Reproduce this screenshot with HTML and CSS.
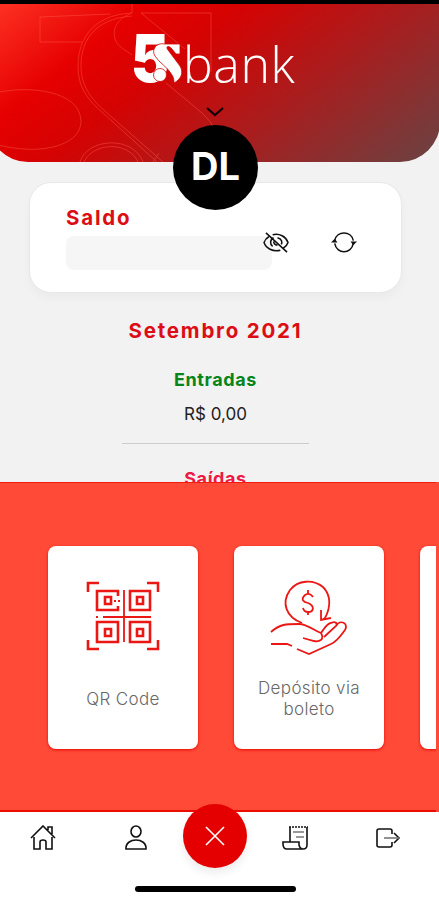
FILE: index.html
```
<!DOCTYPE html>
<html lang="pt-BR">
<head>
    <meta charset="UTF-8">
    <meta name="viewport" content="width=device-width, initial-scale=1.0">
    <title>5S bank</title>
    <link rel="stylesheet" href="styles.css">
</head>
<body>
    <div class="app">
        <header class="header">
            <svg class="header-lines" width="451" height="158" viewBox="-12 4 451 158" fill="none">
                <path d="M110 14 L40 17 V42 H82 M132 4 V13 C90 15 78 42 78 66 C78 88 88 100 103 113 L157 162 M132 16 C92 19 81 43 81 66 C81 86 91 99 106 112 L163 162"/>
                <path d="M132 13 C118 18 112 28 115 39 C117 46 124 49 132 55 M141 13 H211 V72 M141 13 L185 49 M166 83 L202 113 Q210 120 217 132"/>
                <path d="M0 92 C28 86 80 90 81 121 C81 144 48 151 24 149 C12 148 4 147 -8 143 M80 162 C87 138 133 135 143 162 M84 162 C92 143 128 140 138 162 M159 153 L153 162"/>
            </svg>
            <div class="logo">
                <svg class="logo-mark" width="52" height="54" viewBox="0 0 52 54">
                    <text class="logo-five" x="-3" y="50" textLength="38" lengthAdjust="spacingAndGlyphs">5</text>
                    <path class="logo-swoosh" d="M46 12 H31 C22 10 17 18 21 24 C25 31 34 35 38 43 C40 46 40 49 40 51 C47 47 50 41 46 34 L34 18 C31 14 35 13 38 17 L42 22 H46 Z"/>
                    <circle class="logo-ball" cx="26" cy="43" r="6.5"/>
                </svg>
                <span class="logo-name">bank</span>
            </div>
            <svg class="chevron" width="20" height="12" viewBox="0 0 20 12"><path d="M2 2 L10 9 L18 2"/></svg>
            <div class="avatar">DL</div>
        </header>

        <main class="content">
            <section class="balance">
                <div class="balance-info">
                    <h2>Saldo</h2>
                    <div class="balance-value"></div>
                </div>
                <div class="balance-actions">
                    <svg width="27" height="23" viewBox="0 0 28 24">
                        <path d="M10 4 C17 2 24 6 26 12 C25 15 23 17 21 18 M18 20 C10 22 3 18 1 12 C2 9 4 7 6 6 M11 7 C7 9 7 14 10 16 M15 7 C20 8 20 12 19 14 M11 11 Q11 14 15 15 M3 2 L25 22"/>
                    </svg>
                    <svg width="26" height="23" viewBox="0 0 28 24">
                        <path d="M4 10 C6 -1 22 -1 24 10 M4 13 C6 25 22 25 24 13"/>
                        <path class="fill" d="M0 12 L4 8 L7 12 Z M21 11 H28 L24 15 Z"/>
                    </svg>
                </div>
            </section>

            <section class="month">
                <h2>Setembro 2021</h2>
                <h3 class="income">Entradas</h3>
                <p>R$ 0,00</p>
                <h3 class="expense">Saídas</h3>
            </section>
        </main>

        <section class="services">
            <div class="card">
                <svg width="74" height="74" viewBox="0 0 74 74">
                    <path class="thick" d="M2 12 V3 H13 M61 3 H72 V12 M2 60 V69 H13 M61 69 H72 V60"/>
                    <path class="thick" d="M32 16 V11 H11 V30 H32 V26 M44 11 H64 V30 H44 Z M11 42 H32 V62 H11 Z M44 42 H64 V62 H44 Z"/>
                    <path class="thick" d="M19 17 H25 V24 H19 Z M51 17 H57 V24 H51 Z M19 49 H25 V56 H19 Z M51 49 H57 V56 H51 Z"/>
                    <path d="M38 10 V62 M17 37 H65 M10 37 H12 M28 21 H30 M32 21 H34"/>
                </svg>
                <span>QR Code</span>
            </div>
            <div class="card deposit">
                <svg width="78" height="76" viewBox="0 0 78 76">
                    <path d="M32 43 C16 37 11 23 20 10 C28 0 43 -1 53 7 C61 15 61 27 55 38 L52 40 M51 30 V40 L61 38"/>
                    <path d="M43 17 Q40 12 35 15 C30 20 34 22 38 23 C45 26 44 32 38 32 Q34 32 33 28 M38 10 V14 M38 32 V35"/>
                    <path d="M1 52 C10 44 16 44 29 44 C37 44 45 51 51 53 C55 60 49 62 44 61 L33 58 M51 53 C54 49 57 43 61 43 C65 41 68 43 66 46 L54 57 M66 46 C70 39 79 43 75 50 C70 57 66 62 61 64 L39 74 L27 69 M1 64 H17 L22 66"/>
                </svg>
                <span>Depósito via boleto</span>
            </div>
            <div class="card"></div>
        </section>

        <nav class="nav">
            <a href="#" aria-label="Início">
                <svg width="26" height="26" viewBox="0 0 26 26"><path d="M1 13 L13 1 L25 13 M4 12 V24 H10 V17 Q10 15 13 15 Q16 15 16 17 V24 H22 V12 M18 5 V2 H22 V9"/></svg>
            </a>
            <a href="#" aria-label="Perfil">
                <svg width="24" height="26" viewBox="0 0 24 26"><ellipse cx="12" cy="6.5" rx="5" ry="5.5"/><path d="M2 24 C1 12 23 12 22 24 Z"/></svg>
            </a>
            <a href="#" class="close" aria-label="Fechar">
                <svg width="20" height="20" viewBox="0 0 20 20"><path d="M1 1 L19 19 M19 1 L1 19"/></svg>
            </a>
            <a href="#" aria-label="Extrato">
                <svg width="28" height="26" viewBox="0 0 28 26"><path d="M9 17 V2 M26 2 V20 Q26 24 22 24 H6 Q2 24 2 19 V17 H18 V20 Q19 24 22 24"/><path class="perforation" d="M8 2 H27"/><path class="soft" d="M12 7 H23 M15 12 H23"/></svg>
            </a>
            <a href="#" aria-label="Sair">
                <svg width="26" height="26" viewBox="0 0 26 26"><path d="M17 9 V6 Q17 4 15 4 H4 Q2 4 2 6 V20 Q2 22 4 22 H15 Q17 22 17 20 V17 M19 8 L24 13 L19 18"/><path class="soft" d="M9 13 H24"/></svg>
            </a>
            <div class="home-bar"></div>
        </nav>
    </div>
</body>
</html>
```

FILE: styles.css
```
* {
    box-sizing: border-box;
}

body {
    margin: 0;
    font-family: Inter, 'Open Sans', sans-serif;
    background-color: #f2f2f2;
    color: #222;
}

h2, h3, p {
    margin: 0;
}

svg {
    display: block;
    fill: none;
    stroke: #111;
    stroke-width: 1.6;
    flex-shrink: 0;
}

svg .fill {
    fill: #111;
    stroke: none;
}

.app {
    width: 439px;
    height: 900px;
    display: flex;
    flex-direction: column;
    overflow: hidden;
    border-top: 4px solid #000;
}

.header {
    position: relative;
    flex: 0 0 158px;
    width: 452px;
    margin-left: -12px;
    padding: 28px 0 0 12px;
    border-radius: 0 0 40px 40px;
    background: linear-gradient(142deg, #ff3426 0%, #e60000 24%, #d40303 40%, #a61f20 67%, #694343 100%);
}

.header-lines {
    position: absolute;
    top: 0;
    left: 0;
    stroke: #ff5a4c;
    stroke-width: 0.9;
    opacity: 0.5;
}

.logo {
    position: relative;
    display: flex;
    align-items: flex-start;
    margin-left: 134px;
}

.logo-mark {
    stroke: none;
    margin-right: -3px;
    overflow: visible;
}

.logo-five {
    font-size: 66px;
    font-weight: 900;
    fill: #fff;
}

.logo-swoosh, .logo-ball {
    fill: #fff;
    stroke: #d20505;
    stroke-width: 0.8;
}

.logo-name {
    font-family: 'Open Sans', sans-serif;
    font-weight: 300;
    font-size: 50px;
    line-height: 54px;
    letter-spacing: 0.6px;
    margin-top: 5px;
    color: #fff;
}

.chevron {
    position: absolute;
    top: 102px;
    left: 217px;
    stroke: #100;
    stroke-width: 2.2;
}

.avatar {
    position: absolute;
    top: 121px;
    left: 185px;
    width: 85px;
    height: 85px;
    border-radius: 50%;
    background-color: #000;
    color: #fff;
    font-size: 38px;
    font-weight: 700;
    line-height: 82px;
    text-align: center;
}

.content {
    flex: 0 0 320px;
    padding-top: 20px;
    overflow: hidden;
}

.balance {
    display: flex;
    width: 373px;
    height: 111px;
    margin-left: 29px;
    padding: 23px 0 0 36px;
    border: 1px solid #e8e8e8;
    border-radius: 22px;
    background-color: #fff;
    box-shadow: 0 5px 10px rgba(0, 0, 0, 0.03);
}

.balance-info {
    width: 197px;
}

.balance h2, .month h2 {
    color: #dc0d14;
    font-size: 20.5px;
    line-height: 24px;
    letter-spacing: 1.8px;
}

.balance-value {
    width: 206px;
    height: 34px;
    margin-top: 6px;
    border-radius: 8px;
    background-color: #f6f6f6;
}

.balance-actions {
    display: flex;
    gap: 41px;
    padding-top: 25px;
}

.month {
    display: flex;
    flex-direction: column;
    align-items: center;
    width: 187px;
    margin: 26px 0 0 122px;
    text-align: center;
}

.month h2 {
    white-space: nowrap;
}

.month h3 {
    font-size: 18px;
    line-height: 24px;
    letter-spacing: 0.6px;
}

.month .income {
    margin-top: 25px;
    color: #07851b;
}

.month p {
    width: 100%;
    padding: 10px 0 17px;
    border-bottom: 1px solid #ccc;
    font-size: 17px;
    line-height: 24px;
}

.month .expense {
    margin-top: 23px;
    color: #ed1944;
}

.services {
    position: relative;
    flex: 0 0 330px;
    display: flex;
    gap: 36px;
    width: 436px;
    padding: 63px 0 0 48px;
    overflow: hidden;
    border-top: 1px solid #f01c0c;
    border-bottom: 2px solid #eb0c00;
    background-color: #ff4a38;
    box-shadow: 3px 0 0 #ff4a38;
}

.card {
    flex: 0 0 150px;
    height: 203px;
    padding: 34px 20px 0;
    display: flex;
    flex-direction: column;
    align-items: center;
    border-radius: 8px;
    background-color: #fff;
    box-shadow: 0 1px 3px #e80b00;
    color: #686868;
    font-size: 17px;
    font-weight: 300;
    line-height: 21px;
    letter-spacing: 0.35px;
    text-align: center;
}

.card svg {
    stroke: #ea1714;
    stroke-width: 1.8;
}

.card .thick {
    stroke-width: 2.6;
}

.card span {
    margin-top: 35px;
}

.deposit span {
    margin-top: 22px;
}

.nav {
    position: relative;
    flex: 0 0 88px;
    display: grid;
    grid-template-columns: 86px 100px 58px 102px 84px;
    justify-items: center;
    align-items: start;
    padding-top: 13px;
    background-color: #fff;
}

.nav .soft {
    stroke: #777;
}

.nav .perforation {
    stroke-dasharray: 2 1;
}

.nav .close {
    display: flex;
    align-items: center;
    justify-content: center;
    width: 64px;
    height: 64px;
    margin: -21px -3px 0;
    border-radius: 50%;
    background-color: #e50000;
    box-shadow: 0 5px 10px rgba(0, 0, 0, 0.08);
}

.close svg {
    stroke: #fff;
}

.home-bar {
    position: absolute;
    left: 135px;
    bottom: 8px;
    width: 161px;
    height: 6px;
    border-radius: 3px;
    background-color: #000;
}
```
